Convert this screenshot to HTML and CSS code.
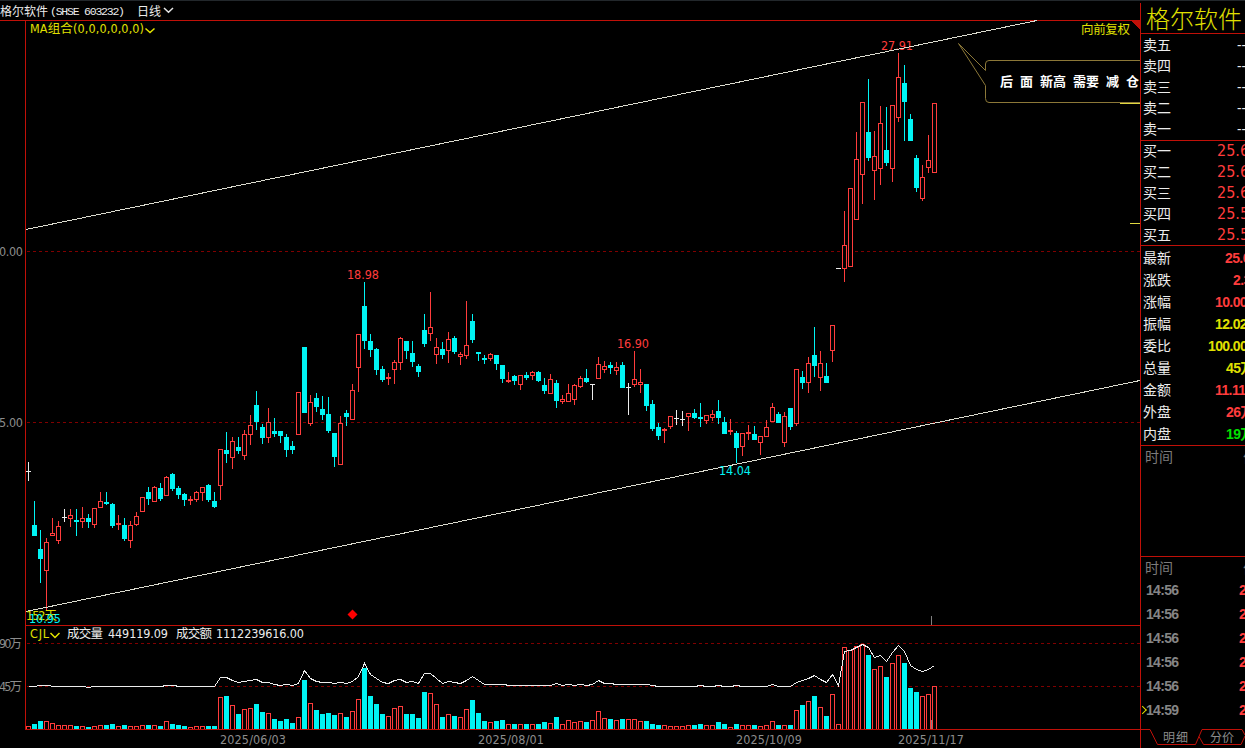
FILE: index.html
```html
<!DOCTYPE html>
<html lang="zh-CN">
<head>
<meta charset="utf-8">
<title>格尔软件 日线</title>
<link rel="stylesheet" href="styles.css">
</head>
<body>
<div class="terminal">
  <main class="chart">
    <header class="titlebar">
      <span class="stock">格尔软件</span><svg class="code" width="89" height="19"><text x="2" y="14" textLength="75">(SHSE 603232)</text></svg><span class="period">日线</span>
      <svg class="chevron" width="11" height="7"><path d="M1 1 5.5 5.3 10 1"/></svg>
    </header>
    <svg class="plot" width="1140" height="728" viewBox="0 20 1140 728">
      <g class="grid"><path d="M27 251.5H1140M27 422.5H1140M27 643.5H1140M27 686.5H1140"/></g>
      <g class="frame"><path d="M0 20.5H1140M25.5 20V730M25 625.5H1140"/><path class="corner" d="M1131 21H1140V30Z"/></g>
      <g id="bars"></g>
      <path class="frame" d="M25 729.5H1140"/>
      <path class="amount" id="amount"/>
      <g class="num red">
        <text x="347" y="279" textLength="32">18.98</text>
        <text x="617" y="348" textLength="32">16.90</text>
        <text x="881" y="50" textLength="32">27.91</text>
      </g>
      <path class="trend" d="M26 229.5 1037 20.5M26 611.5 1140 380.5"/>
      <text class="num cyan" x="719" y="475" textLength="32">14.04</text>
      <text class="num yellow" x="26" y="620" textLength="31">152天</text>
      <text class="num cyan" x="29" y="623" textLength="32">10.95</text>
      <path class="diamond" d="M352.5 609.5 357.5 614.5 352.5 619.5 347.5 614.5Z"/>
      <path class="marker" d="M931.5 616V625M931.5 720V729"/>
      <path class="pricetick" d="M1120 103.5H1140M1130 223.5H1140"/>
      <path class="callout" d="M1140 60.5H989Q985.5 60.5 985.5 64V70.5L958.5 43.5 985.5 85.500V98.500Q985.5 102.500 989 102.500H1140"/>
      <text class="note" y="86" x="1000 1020 1040 1053 1073 1086 1106 1126">后面新高需要减仓</text>
      <text class="num yellow" x="30" y="33" textLength="114">MA组合(0,0,0,0,0,0)</text>
      <path class="chev yellowline" d="M145.500 28.500 150 32.500 154.500 28.500"/>
      <text class="num yellow" x="1081" y="34" textLength="49">向前复权</text>
      <text class="num yellow" x="30" y="638" textLength="19">CJL</text>
      <path class="chev yellowline" d="M50.500 633 55 637.500 59.500 633"/>
      <g class="num white">
        <text x="67" y="638" textLength="36">成交量</text><text x="108" y="638" textLength="60">449119.09</text>
        <text x="176" y="638" textLength="36">成交额</text><text x="216" y="638" textLength="88">1112239616.00</text>
      </g>
      <g class="num gray">
        <text x="-1" y="256" textLength="24">0.00</text><text x="-1" y="427" textLength="24">5.00</text>
        <text x="-1" y="648" textLength="23">90万</text><text x="-1" y="691" textLength="23">45万</text>
        <text x="220" y="744" textLength="66">2025/06/03</text>
        <text x="478" y="744" textLength="66">2025/08/01</text>
        <text x="736" y="744" textLength="66">2025/10/09</text>
        <text x="898" y="744" textLength="66">2025/11/17</text>
      </g>
    </svg>
  </main>
  <aside class="panel">
    <h1 class="name">格尔软件</h1>
    <section class="book asks">
      <div><span>卖五</span><b>--</b></div><div><span>卖四</span><b>--</b></div><div><span>卖三</span><b>--</b></div><div><span>卖二</span><b>--</b></div><div><span>卖一</span><b>--</b></div>
    </section>
    <section class="book bids">
      <div><span>买一</span><b>25.6</b></div><div><span>买二</span><b>25.6</b></div><div><span>买三</span><b>25.6</b></div><div><span>买四</span><b>25.5</b></div><div><span>买五</span><b>25.5</b></div>
    </section>
    <section class="stats">
      <div><span>最新</span><b class="red w20">25.6</b></div>
      <div><span>涨跌</span><b class="red w13">2.3</b></div>
      <div><span>涨幅</span><b class="red w30">10.00</b></div>
      <div><span>振幅</span><b class="yellow w30">12.02</b></div>
      <div><span>委比</span><b class="yellow w37">100.00</b></div>
      <div><span>总量</span><b class="yellow w19">45万</b></div>
      <div><span>金额</span><b class="red w30">11.11亿</b></div>
      <div><span>外盘</span><b class="red w19">26万</b></div>
      <div><span>内盘</span><b class="green w19">19万</b></div>
    </section>
    <section class="blank"><div class="colhead"><span>时间</span><span class="price">价</span></div></section>
    <section class="ticks">
      <div class="colhead"><span>时间</span><span class="price">价</span></div>
      <div class="tick"><span>14:56</span><b>25</b></div>
      <div class="tick"><span>14:56</span><b>25</b></div>
      <div class="tick"><span>14:56</span><b>25</b></div>
      <div class="tick"><span>14:56</span><b>25</b></div>
      <div class="tick"><span>14:56</span><b>25</b></div>
      <div class="tick last"><span>14:59</span><b>25</b></div>
    </section>
    <svg class="tabs" width="105" height="19" viewBox="1140 729 105 19">
      <path d="M1140 729.500H1150L1157.500 744.500H1195.500L1202 729.500H1242L1245 735M1199 736.500 1203.500 744.500H1241L1245 736"/>
      <text x="1163" y="742" textLength="25">明细</text><text x="1210" y="742" textLength="24">分价</text>
    </svg>
  </aside>
</div>
<script src="chart.js"></script>
</body>
</html>
```
FILE: styles.css
```css
* { box-sizing: border-box; }
body { margin: 0; background: #000; overflow: hidden; font-family: "Noto Sans", "Noto Sans CJK SC", sans-serif; }
.terminal { display: grid; grid-template-columns: 1140px 105px; width: 1245px; height: 748px; border-top: 1px solid #22272b; overflow: hidden; color: #ececec; }
.chart { display: flex; flex-direction: column; overflow: hidden; }
.titlebar { display: flex; align-items: center; height: 19px; flex: none; font-size: 12px; line-height: 19px; white-space: nowrap; font-family: "Noto Sans CJK SC", sans-serif; font-weight: 400; }
.code { flex: none; }
.code text { font: 11.5px "Liberation Mono", monospace; fill: #ececec; }
.stock { width: 48px; }
.period { width: 26px; }
.chevron path { fill: none; stroke: #e6e6e6; stroke-width: 1.5; }
.plot { display: block; flex: none; }

.grid, .frame, .marker, .pricetick, .trend, #bars { shape-rendering: crispEdges; }
.grid path { stroke: #800000; stroke-dasharray: 3 3; fill: none; }
.frame { stroke: #c01008; fill: none; }
.corner { fill: #c01008; stroke: none; }
.amount { fill: none; stroke: #ececec; shape-rendering: crispEdges; }
.trend { fill: none; stroke: #dcdcd0; }
.marker { stroke: #808080; }
.pricetick { stroke: #e0d840; }
.diamond { fill: #f00; }
.callout { fill: none; stroke: #8c7838; }
.note { font: 700 13px "Noto Sans CJK SC", sans-serif; fill: #fff; }
.chev { fill: none; stroke-width: 1.5; }
.yellowline { stroke: #e6e600; }
.up { fill: #000; stroke: #ff3c3c; }
.upwick { fill: #ff3c3c; }
.down { fill: #00f4f4; }
.flat { fill: #ececec; }

.num { font: 12.5px "DejaVu Sans Condensed", "Noto Sans", "Noto Sans CJK SC", sans-serif; }
text.red, .num.red { fill: #ff3c3c; }
text.yellow { fill: #e0e000; }
text.cyan { fill: #00f4f4; }
.num.white { fill: #ececec; }
.num.gray { fill: #8c8c8c; }

.panel { border-left: 1px solid #c01008; margin-top: 2px; overflow: hidden; display: flex; flex-direction: column; font-family: "Noto Sans CJK SC", sans-serif; }
.name { margin: 0; height: 31px; flex: none; padding-left: 5px; font-size: 24px; line-height: 29px; font-weight: 300; color: #e0e000; white-space: nowrap; border-bottom: 1px solid #c01008; }
.book, .stats, .blank, .ticks { flex: none; border-bottom: 1px solid #c01008; white-space: nowrap; overflow: hidden; }
.book div { display: flex; justify-content: space-between; height: 21px; padding-left: 2px; line-height: 21px; font-size: 14px; font-weight: 400; }
.book b { font: 16px/21px "DejaVu Sans Condensed", sans-serif; }
.asks { height: 107px; }
.asks b { width: 8px; font: 14px/23px "DejaVu Sans Condensed", sans-serif; }
.bids { height: 105px; }
.bids div { line-height: 19px; }
.bids b { width: 28px; line-height: 20px; color: #ff3c3c; }
.stats { height: 200px; }
.stats div { display: flex; justify-content: space-between; height: 22px; padding-left: 2px; font-size: 14px; line-height: 22px; font-weight: 400; }
.stats b { font: 700 14px/24px "Liberation Sans", "Noto Sans CJK SC", sans-serif; letter-spacing: -0.6px; }
.w13 { width: 12px; } .w19 { width: 19px; } .w20 { width: 20px; } .w30 { width: 30px; } .w37 { width: 37px; }
b.red { color: #ff3c3c; } b.yellow { color: #e0e000; } b.green { color: #00e000; }
.colhead { display: flex; justify-content: space-between; height: 22px; line-height: 20px; padding-left: 4px; font-size: 14px; font-weight: 400; color: #7c7c7c; }
.price { width: 2px; }
.blank { height: 111px; }
.ticks { height: 172px; border-bottom: 0; }
.tick { position: relative; display: flex; justify-content: space-between; height: 24px; padding-left: 5px; font: 700 14px/22px "Liberation Sans", sans-serif; letter-spacing: -0.7px; color: #858585; }
.tick b { width: 6px; color: #ff3c3c; }
.last::before { content: ""; position: absolute; left: 0; top: 8px; width: 5px; height: 5px; border: solid #e0e000; border-width: 1.5px 1.5px 0 0; transform: rotate(45deg) translate(-1px, 1px); }
.tabs { flex: none; margin-left: -1px; }
.tabs path { fill: none; stroke: #c01008; }
.tabs text { font: 400 12px "Noto Sans CJK SC", sans-serif; fill: #8c8c8c; }
```
FILE: chart.js
```js
// One row per day: kind, high, body top, body bottom, low, volume top.
const days = `w 462 471 472 481 726
c 501 525 536 536 724
c 530 549 559 583 721
r 538 542 571 611 721
r 518 533 536 536 723
r 521 526 541 544 725
w 509 517 518 522 725
r 509 515 519 527 725
c 509 520 522 536 726
r 507 518 522 528 726
c 514 518 522 528 727
r 508 508 525 528 726
r 492 501 508 508 725
c 492 502 504 505 725
c 503 504 526 528 724
r 515 523 525 530 726
c 518 525 539 541 725
r 521 525 541 548 726
r 512 516 525 526 726
r 497 497 512 512 725
c 487 492 499 505 725
r 486 487 502 502 725
c 483 488 499 501 726
r 476 477 496 496 721
c 473 474 489 491 724
c 486 488 495 499 725
c 493 494 500 506 726
r 496 499 501 505 727
r 491 492 500 502 726
r 487 487 493 501 726
c 484 485 500 502 726
c 492 501 507 508 726
r 449 449 486 500 697
c 432 450 454 463 696
r 437 441 458 469 705
c 437 447 451 454 714
r 430 434 456 460 709
r 415 425 435 445 708
c 391 405 422 430 704
c 424 427 438 444 712
r 408 422 438 443 713
c 418 431 434 437 719
c 431 431 436 443 721
c 434 437 450 457 719
c 441 446 450 454 723
r 392 392 435 435 717
c 347 347 413 413 680
r 395 402 424 426 703
c 393 398 407 412 710
c 396 409 415 420 714
c 397 414 431 433 713
c 433 433 457 467 715
r 416 423 465 465 713
c 410 413 417 426 717
r 384 390 420 420 711
r 334 334 368 392 699
c 282 306 341 349 668
c 334 341 350 357 696
c 348 349 370 375 704
c 366 369 380 382 714
r 373 377 379 385 716
r 360 362 370 384 708
r 337 338 363 370 706
c 341 341 351 359 714
c 341 353 362 367 714
c 364 366 372 377 718
c 314 330 344 347 692
r 292 327 334 341 693
r 338 347 355 364 704
c 342 349 355 359 717
r 332 339 351 363 714
c 336 338 352 354 716
r 352 354 357 365 717
r 301 345 356 359 709
c 314 321 340 343 700
c 352 352 354 361 713
c 355 358 360 364 721
r 353 354 359 361 722
c 355 355 364 370 721
c 365 365 379 383 720
r 372 380 382 383 724
c 375 376 381 385 724
r 375 375 385 390 724
c 372 375 378 380 724
r 371 372 376 380 724
c 371 372 381 382 724
c 378 385 391 394 722
r 374 379 394 394 723
c 380 383 401 408 717
r 395 399 402 404 724
r 384 393 402 402 720
r 384 385 400 405 722
r 376 378 387 388 721
c 369 378 382 383 722
w 384 384 385 400 720
r 357 364 379 379 711
r 361 366 370 373 718
c 362 365 368 374 719
r 362 367 371 375 720
c 362 365 388 388 719
w 383 387 388 415 719
r 351 379 385 387 719
r 369 382 385 393 721
c 384 384 406 411 721
c 400 404 429 431 724
c 423 427 436 440 725
r 428 429 431 443 725
r 416 416 427 429 726
w 410 418 419 425 726
w 411 419 420 426 726
r 413 413 417 431 725
c 409 413 418 419 725
c 403 417 419 427 724
r 415 415 421 424 725
r 410 414 418 421 725
c 400 411 418 424 722
c 417 422 434 434 724
r 419 430 432 435 727
c 431 433 448 463 724
r 433 433 447 456 725
r 425 432 434 440 725
c 426 434 440 440 725
r 436 436 443 455 726
r 420 427 437 437 725
r 403 407 422 422 721
c 412 414 423 423 725
r 412 416 443 447 725
c 408 408 427 430 725
r 369 369 424 426 710
c 371 377 383 389 705
r 357 363 383 393 701
c 327 355 366 377 696
r 351 363 378 391 707
c 363 376 383 383 716
r 325 325 351 362 694
w 268 268 269 269 724
r 211 245 269 282 647
r 188 188 267 267 650
r 132 159 220 220 646
r 102 102 175 204 644
c 79 132 158 161 655
r 131 156 171 200 669
r 106 123 169 185 666
c 107 150 163 166 677
r 105 105 169 182 663
r 53 77 118 122 655
c 65 83 102 141 663
c 114 119 141 141 688
c 155 158 188 192 692
r 165 177 199 201 696
r 135 160 168 173 694
r 103 103 173 173 686`.split("\n").map(row => row.split(" "));

const rect = (cls, x, y, w, h) => `<rect class="${cls}" x="${x}" y="${y}" width="${w}" height="${h}"/>`;
const hollow = (x, y, h) => rect("up", x + 0.5, y + 0.5, 4, h - 1);

let out = "";
days.forEach((d, i) => {
  const kind = d[0];
  const [high, top, bottom, low, volume] = d.slice(1).map(Number);
  const x = 28 + i * 6;
  const wick = { r: "upwick", c: "down", w: "flat" }[kind];
  out += rect(wick, x, high, 1, low - high);
  out += kind === "r" ? hollow(x - 2, top, bottom - top) : rect(wick, x - 2, top, 5, bottom - top);
  out += kind === "c" ? rect("down", x - 2, volume, 5, 729 - volume) : hollow(x - 2, volume, 730 - volume);
});
document.getElementById("bars").innerHTML = out;

const amount = [[28,686],[35,686],[38,685],[49,685],[52,686],[82,686],[88,687],[94,686],[160,686],[166,685],[174,685],[178,686],[214,686],
[220,677],[226,677],[232,680],[238,682],[244,681],[250,680],[256,679],[262,682],[268,682],[274,684],[280,685],[286,684],[292,685],[298,683],
[304,670],[310,678],[316,681],[322,682],[328,682],[334,683],[340,682],[346,683],[352,681],[358,676],[364,663],[370,674],[376,678],[382,682],
[388,683],[394,680],[400,679],[406,682],[412,681],[418,683],[424,673],[430,673],[436,678],[442,683],[448,681],[454,682],[460,683],[466,680],
[472,676],[478,680],[484,684],[504,684],[508,685],[550,685],[556,683],[562,685],[568,684],[574,685],[580,684],[586,685],[592,684],[598,680],
[604,683],[610,683],[616,684],[646,684],[652,685],[658,686],[694,686],[700,685],[706,686],[712,686],[718,685],[724,686],[730,686],[736,685],
[742,686],[766,686],[772,684],[778,686],[790,686],[796,682],[802,680],[808,678],[814,675],[820,679],[826,682],[832,674],[838,685],[844,651],
[850,650],[856,647],[862,644],[868,647],[874,657],[880,655],[886,661],[892,652],[898,645],[904,651],[910,665],[916,669],[922,671],[928,669],[934,665]];
document.getElementById("amount").setAttribute("d", "M" + amount.map(([x, y]) => `${x + 0.5} ${y + 0.5}`).join("L"));
```
